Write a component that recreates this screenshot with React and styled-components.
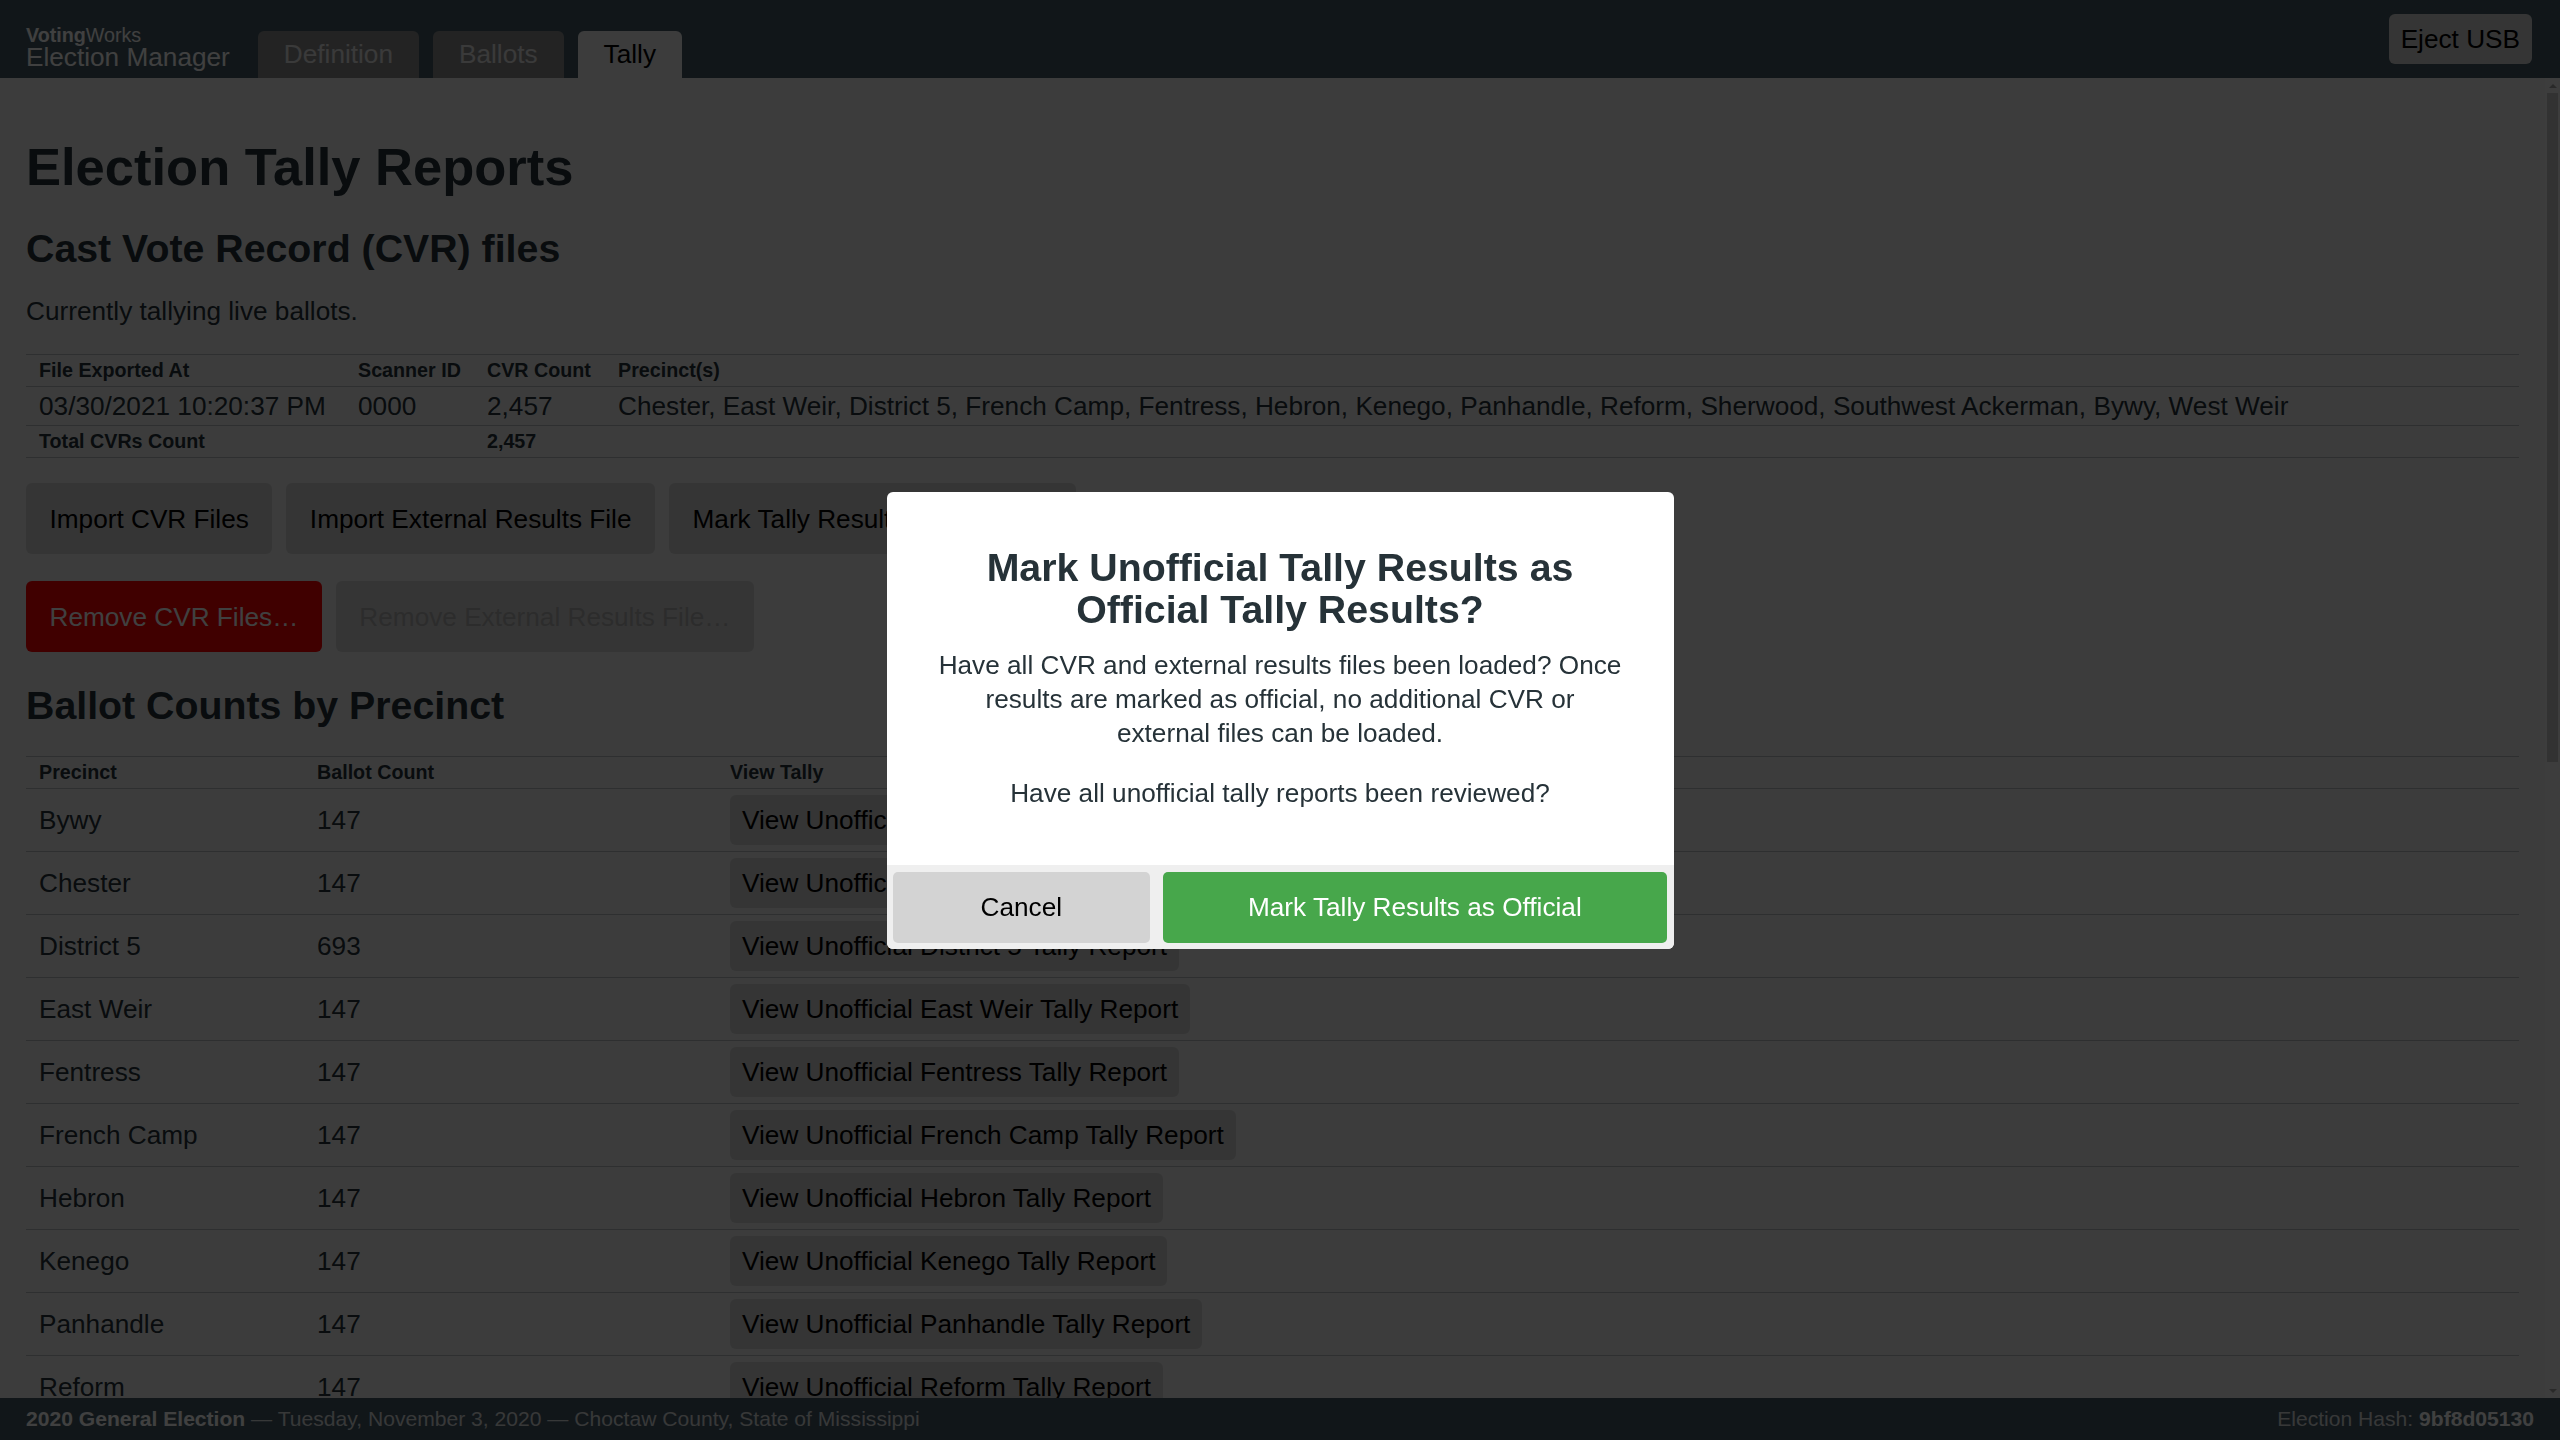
import React from 'react';
import styled, { createGlobalStyle } from 'styled-components';

const GlobalStyle = createGlobalStyle`
  html, body {
    margin: 0;
    padding: 0;
    height: 100%;
  }
  body {
    font-family: "Liberation Sans", Arial, Helvetica, sans-serif;
    background: #edeff0;
    color: #263238;
  }
`;

const precincts = [
  ['Bywy', 147],
  ['Chester', 147],
  ['District 5', 693],
  ['East Weir', 147],
  ['Fentress', 147],
  ['French Camp', 147],
  ['Hebron', 147],
  ['Kenego', 147],
  ['Panhandle', 147],
  ['Reform', 147],
  ['Sherwood', 147],
  ['Southwest Ackerman', 147],
  ['West Weir', 147],
];

const App = () => {
  return (
    <>
      <GlobalStyle />
      <Screen>
        <TopBar>
          <Brand>
            <BrandSmall>
              <strong>Voting</strong>Works
            </BrandSmall>
            <BrandName>Election Manager</BrandName>
          </Brand>
          <Tabs>
            <Tab>Definition</Tab>
            <Tab>Ballots</Tab>
            <Tab $active>Tally</Tab>
          </Tabs>
          <EjectButton>Eject USB</EjectButton>
        </TopBar>

        <Body>
          <Content>
            <Title>Election Tally Reports</Title>
            <SectionTitle>Cast Vote Record (CVR) files</SectionTitle>
            <Note>Currently tallying live ballots.</Note>

            <DataTable>
              <thead>
                <tr>
                  <HeadCell $width="293px">File Exported At</HeadCell>
                  <HeadCell $width="103px">Scanner ID</HeadCell>
                  <HeadCell $width="105px">CVR Count</HeadCell>
                  <HeadCell>Precinct(s)</HeadCell>
                </tr>
              </thead>
              <tbody>
                <tr>
                  <Cell>03/30/2021 10:20:37 PM</Cell>
                  <Cell>0000</Cell>
                  <Cell>2,457</Cell>
                  <Cell>
                    Chester, East Weir, District 5, French Camp, Fentress, Hebron, Kenego,
                    Panhandle, Reform, Sherwood, Southwest Ackerman, Bywy, West Weir
                  </Cell>
                </tr>
                <tr>
                  <Cell $small>Total CVRs Count</Cell>
                  <Cell $small />
                  <Cell $small>2,457</Cell>
                  <Cell $small />
                </tr>
              </tbody>
            </DataTable>

            <ButtonRow>
              <Button>Import CVR Files</Button>
              <Button>Import External Results File</Button>
              <Button>Mark Tally Results as Official…</Button>
            </ButtonRow>
            <ButtonRow>
              <Button $variant="danger">Remove CVR Files…</Button>
              <Button disabled>Remove External Results File…</Button>
            </ButtonRow>

            <SectionTitle $spaced>Ballot Counts by Precinct</SectionTitle>
            <DataTable>
              <thead>
                <tr>
                  <HeadCell $width="252px">Precinct</HeadCell>
                  <HeadCell $width="387px">Ballot Count</HeadCell>
                  <HeadCell>View Tally</HeadCell>
                </tr>
              </thead>
              <tbody>
                {precincts.map(([name, count]) => (
                  <tr key={name}>
                    <Cell $roomy>{name}</Cell>
                    <Cell $roomy>{count}</Cell>
                    <Cell $roomy>
                      <SmallButton>View Unofficial {name} Tally Report</SmallButton>
                    </Cell>
                  </tr>
                ))}
                <tr>
                  <Cell $roomy $bold>Total Ballot Count</Cell>
                  <Cell $roomy $bold>2,457</Cell>
                  <Cell $roomy>
                    <SmallButton>View Unofficial Full Election Tally Report</SmallButton>
                  </Cell>
                </tr>
              </tbody>
            </DataTable>

            <SectionTitle $spaced>Ballot Counts by Scanner</SectionTitle>
            <DataTable>
              <thead>
                <tr>
                  <HeadCell $width="252px">Scanner ID</HeadCell>
                  <HeadCell $width="387px">Ballot Count</HeadCell>
                  <HeadCell>View Tally</HeadCell>
                </tr>
              </thead>
              <tbody>
                <tr>
                  <Cell $roomy>0000</Cell>
                  <Cell $roomy>2,457</Cell>
                  <Cell $roomy>
                    <SmallButton>View Unofficial Scanner 0000 Tally Report</SmallButton>
                  </Cell>
                </tr>
                <tr>
                  <Cell $roomy $bold>Total Ballot Count</Cell>
                  <Cell $roomy $bold>2,457</Cell>
                  <Cell $roomy />
                </tr>
              </tbody>
            </DataTable>

            <SectionTitle $spaced>Other Reports</SectionTitle>
            <ButtonRow>
              <Button>View Unofficial Full Election Tally Report</Button>
              <Button>Save Results File</Button>
            </ButtonRow>
          </Content>

          {/* drawn scrollbar: the headless browser hides the native one */}
          <ScrollRail aria-hidden="true">
            <ScrollArrow $dir="up" />
            <ScrollTrack>
              <ScrollThumb />
            </ScrollTrack>
            <ScrollArrow $dir="down" />
          </ScrollRail>
        </Body>

        <Footer>
          <span>
            <strong>2020 General Election</strong> — Tuesday, November 3, 2020 — Choctaw County,
            State of Mississippi
          </span>
          <span>
            Election Hash: <strong>9bf8d05130</strong>
          </span>
        </Footer>
      </Screen>

      <Overlay>
        <Modal role="dialog">
          <ModalContent>
            <ModalTitle>Mark Unofficial Tally Results as Official Tally Results?</ModalTitle>
            <ModalText>
              Have all CVR and external results files been loaded? Once
              <br />
              results are marked as official, no additional CVR or
              <br />
              external files can be loaded.
            </ModalText>
            <ModalText>Have all unofficial tally reports been reviewed?</ModalText>
          </ModalContent>
          <ModalActions>
            <ModalButton>Cancel</ModalButton>
            <ModalButton $primary>Mark Tally Results as Official</ModalButton>
          </ModalActions>
        </Modal>
      </Overlay>
    </>
  );
};

const Screen = styled.div`
  display: flex;
  flex-direction: column;
  height: 100vh;
`;

const TopBar = styled.header`
  flex: 0 0 78px;
  display: flex;
  align-items: flex-end;
  padding: 0 28px 0 26px;
  background: #455a64;
  color: #ffffff;
`;

const Brand = styled.div`
  display: flex;
  flex-direction: column;
  line-height: 1;
  padding-bottom: 8px;
`;

const BrandSmall = styled.div`
  font-size: 19.7px;
  margin-bottom: -2px;
  strong {
    font-weight: 700;
  }
`;

const BrandName = styled.div`
  font-size: 26.2px;
`;

const Tabs = styled.nav`
  display: flex;
  gap: 14px;
  margin-left: 28px;
`;

const Tab = styled.a`
  display: block;
  height: 47px;
  line-height: 47px;
  padding: 0 26px;
  border-radius: 6px 6px 0 0;
  font-size: 26.2px;
  background: ${(p) => (p.$active ? '#edeff0' : '#8a8c8d')};
  color: ${(p) => (p.$active ? '#000000' : '#e6e6e6')};
`;

const EjectButton = styled.button`
  align-self: center;
  margin-left: auto;
  height: 50px;
  padding: 0 12px;
  border: none;
  border-radius: 6px;
  background: #d3d3d3;
  color: #000;
  font-family: inherit;
  font-size: 26.2px;
`;

const Body = styled.div`
  flex: 1;
  min-height: 0;
  display: flex;
`;

const Content = styled.main`
  flex: 1;
  min-width: 0;
  overflow-y: auto;
  scrollbar-width: none;
  padding: 26px;
`;

const ScrollRail = styled.div`
  flex: 0 0 15px;
  display: flex;
  flex-direction: column;
  background: #f1f1f1;
`;

const ScrollArrow = styled.div`
  flex: 0 0 15px;
  display: flex;
  align-items: center;
  justify-content: center;

  &::before {
    content: '';
    border-left: 4px solid transparent;
    border-right: 4px solid transparent;
    ${(p) =>
      p.$dir === 'up' ? 'border-bottom: 4px solid #a3a3a3;' : 'border-top: 4px solid #a3a3a3;'}
  }
`;

const ScrollTrack = styled.div`
  flex: 1;
  padding: 0 2px;
`;

const ScrollThumb = styled.div`
  height: 669px;
  background: #c8c8c8;
`;

const Title = styled.h1`
  margin: 32px 0 28px;
  font-size: 52.5px;
  line-height: 61px;
  font-weight: 700;
`;

const SectionTitle = styled.h2`
  margin: ${(p) => (p.$spaced ? '30px' : '0')} 0 ${(p) => (p.$spaced ? '27px' : '24px')};
  font-size: 39.3px;
  line-height: 47px;
  font-weight: 700;
`;

const Note = styled.p`
  margin: 0 0 27px;
  font-size: 26.2px;
  line-height: 31px;
`;

const DataTable = styled.table`
  width: 100%;
  border-collapse: collapse;
  table-layout: fixed;
  margin-bottom: 25px;
  border-bottom: 1px solid #b8bcbe;
`;

const HeadCell = styled.th`
  width: ${(p) => p.$width || 'auto'};
  padding: 4px 13px;
  border-top: 1px solid #b8bcbe;
  text-align: left;
  font-size: 19.7px;
  line-height: 23px;
  font-weight: 700;
  white-space: nowrap;
`;

const Cell = styled.td`
  padding: ${(p) => (p.$roomy ? '6px 13px' : '4px 13px')};
  border-top: 1px solid #b8bcbe;
  vertical-align: middle;
  font-size: ${(p) => (p.$small ? '19.7px' : '26.2px')};
  font-weight: ${(p) => (p.$small || p.$bold ? 700 : 400)};
  line-height: ${(p) => (p.$small ? '23px' : '30px')};
  white-space: nowrap;
`;

const ButtonRow = styled.div`
  display: flex;
  gap: 14px;
  margin-bottom: 27px;
`;

const buttonColors = {
  default: ['#d3d3d3', '#000000'],
  danger: ['#ff0000', '#ffffff'],
};

const Button = styled.button`
  padding: 19.5px 23.5px;
  border: none;
  border-radius: 6px;
  background: ${(p) => buttonColors[p.$variant || 'default'][0]};
  color: ${(p) => buttonColors[p.$variant || 'default'][1]};
  font-family: inherit;
  font-size: 26.2px;
  line-height: 32px;
  white-space: nowrap;

  &:disabled {
    background: #d3d3d3;
    color: #b0b0b0;
  }
`;

const SmallButton = styled.button`
  padding: 10px 12px;
  border: none;
  border-radius: 6px;
  background: #d3d3d3;
  color: #000;
  font-family: inherit;
  font-size: 26.2px;
  line-height: 30px;
  white-space: nowrap;
`;

const Footer = styled.footer`
  flex: 0 0 42px;
  display: flex;
  align-items: center;
  justify-content: space-between;
  padding: 0 26px;
  background: #455a64;
  color: #dcdfe0;
  font-size: 21.1px;

  strong {
    color: #ffffff;
    font-weight: 700;
  }
`;

const Overlay = styled.div`
  position: fixed;
  inset: 0;
  display: flex;
  align-items: center;
  justify-content: center;
  background: rgba(0, 0, 0, 0.75);
`;

const Modal = styled.div`
  width: 787px;
  background: #ffffff;
  border-radius: 6px;
  overflow: hidden;
`;

const ModalContent = styled.div`
  padding: 54px 30px 55px;
  text-align: center;
`;

const ModalTitle = styled.h1`
  margin: 0 20px 18px;
  font-size: 39.3px;
  line-height: 42px;
  font-weight: 700;
  color: #263238;
`;

const ModalText = styled.p`
  margin: 0 0 26px;
  font-size: 26.2px;
  line-height: 34px;
  color: #263238;

  &:last-child {
    margin-bottom: 0;
  }
`;

const ModalActions = styled.div`
  display: flex;
  gap: 13px;
  padding: 7px 7px 6px 6px;
  background: #efefef;
`;

const ModalButton = styled.button`
  flex: ${(p) => (p.$primary ? 2 : 1)};
  height: 71px;
  border: none;
  border-radius: 5px;
  background: ${(p) => (p.$primary ? '#47a74b' : '#d3d3d3')};
  color: ${(p) => (p.$primary ? '#ffffff' : '#000000')};
  font-family: inherit;
  font-size: 26.2px;
`;

export default App;
